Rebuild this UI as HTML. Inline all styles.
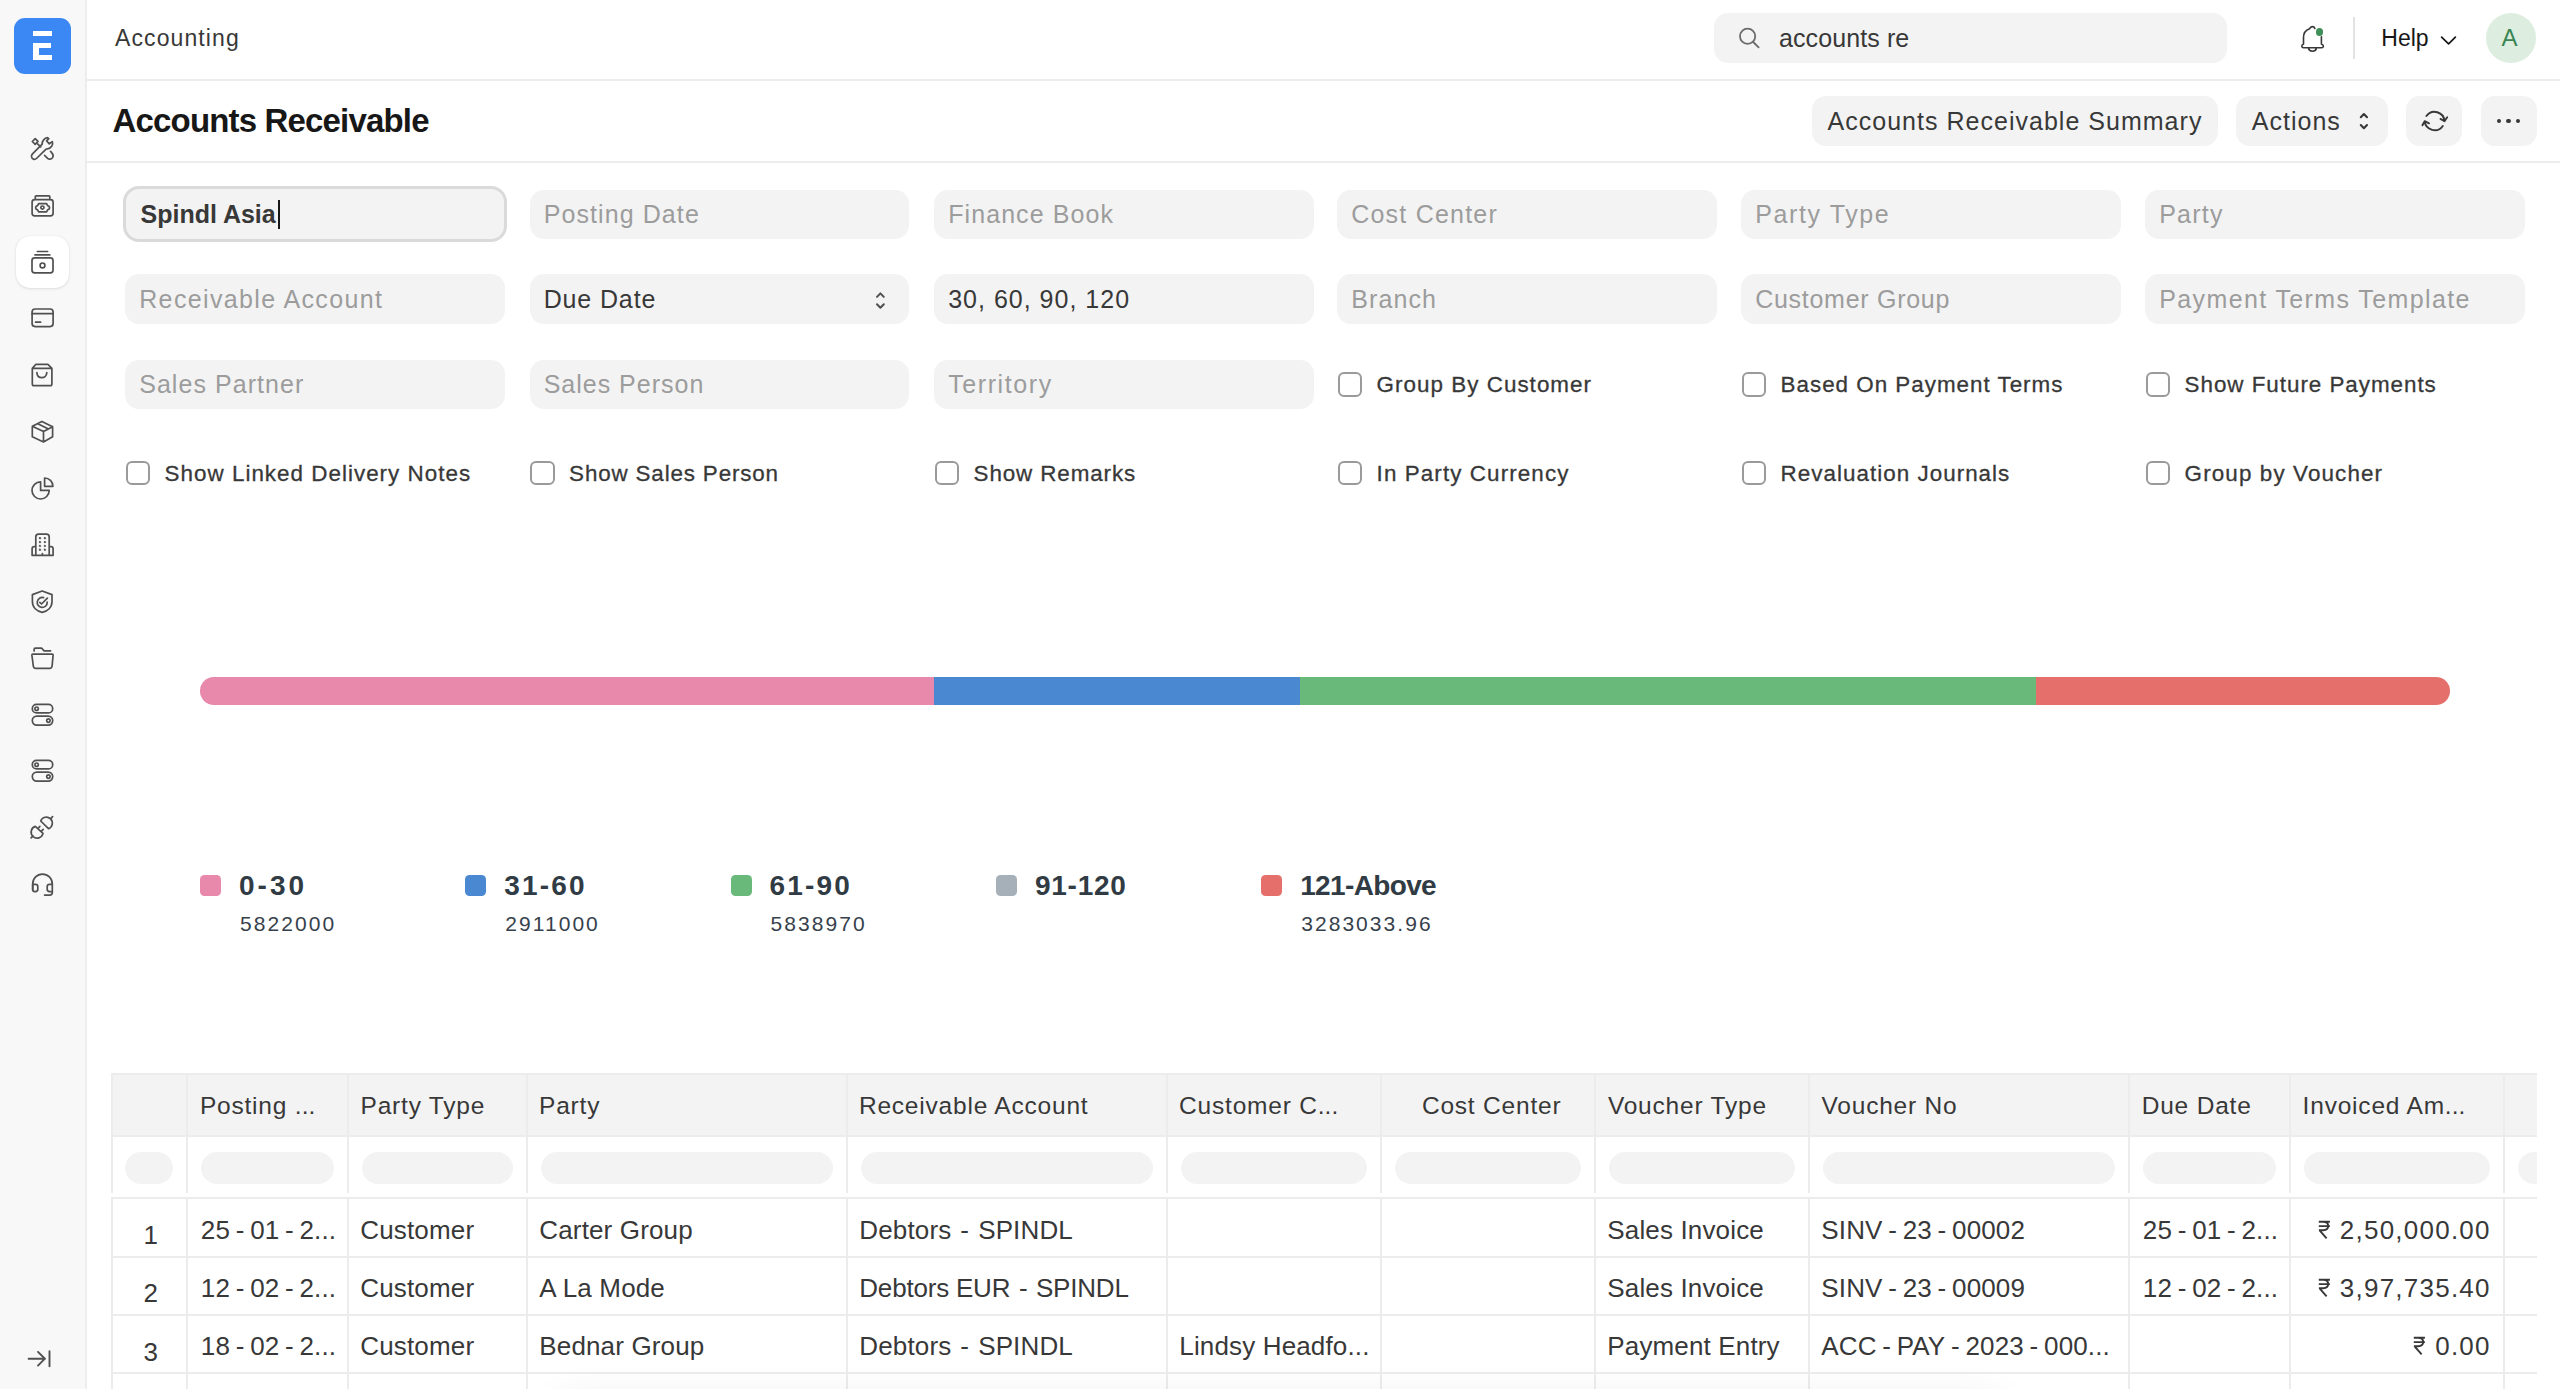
<!DOCTYPE html>
<html><head><meta charset="utf-8"><style>
*{box-sizing:border-box;margin:0;padding:0}
html,body{width:2560px;height:1389px;overflow:hidden;background:#fff;font-family:"Liberation Sans",sans-serif;color:#383838}
.a{position:absolute}
.t{position:absolute;white-space:nowrap}
.hy{margin:0 5.65px}
</style></head><body>
<div class="a" style="left:0px;top:0px;width:86px;height:1389px;background:#f8f8f8;"></div>
<div class="a" style="left:85px;top:0px;width:2px;height:1389px;background:#ededed;"></div>
<div class="a" style="left:14px;top:18px;width:57px;height:56px;border-radius:11px;background:#3b87f4"></div>
<div class="a" style="left:33px;top:31px;width:19px;height:5px;background:#fff;"></div>
<div class="a" style="left:33px;top:43px;width:18px;height:5px;background:#fff;"></div>
<div class="a" style="left:33px;top:43px;width:6px;height:17px;background:#fff;"></div>
<div class="a" style="left:33px;top:55px;width:19px;height:5px;background:#fff;"></div>
<svg class="a" style="left:22px;top:128px" width="40" height="40" viewBox="0 0 40 40" fill="none" stroke="#505050" stroke-width="1.7" stroke-linecap="round" stroke-linejoin="round"><path d="M20.2,16.1 C20,13 22.5,10 25.5,9.6 L26.8,10.6 L24.6,12.9 L27.3,15.8 L30.3,13.6 C31.6,16.8 29,20.6 25.5,20.8 L23.8,21.3 L14.5,30.5 C13,32 9.8,31.5 9.5,28.5 C9.3,27.5 9.8,26.5 10.5,25.8 Z"/><path d="M10.3,13.5 L13.2,10.6 L16,13.4 L13.2,16.3 Z M15.6,15.9 L18.7,18.9"/><path d="M22.6,27.4 L25.6,30.3 C27,31.6 29.6,31.3 30.6,29.6 C31.4,28.2 31,26.2 30,25.1 L28.5,23.3"/></svg>
<svg class="a" style="left:22px;top:185px" width="40" height="40" viewBox="0 0 40 40" fill="none" stroke="#505050" stroke-width="1.7" stroke-linecap="round" stroke-linejoin="round"><path d="M13.3,13.2 V11.6 Q13.3,10.8 14.1,10.8 H27 Q27.8,10.8 27.8,11.6 V13.2"/><rect x="10.1" y="14.6" width="21" height="16.2" rx="2.6"/><path d="M16.6,18.6 H24.6 L25.6,20.6 Q27.6,21 27.6,22.7 Q27.6,24.4 25.6,24.8 L24.6,26.8 H16.6 L15.6,24.8 Q13.6,24.4 13.6,22.7 Q13.6,21 15.6,20.6 Z"/><circle cx="20.4" cy="22.6" r="1.6"/></svg>
<div class="a" style="left:16px;top:236px;width:53px;height:52px;border-radius:14px;background:#fff;box-shadow:0 1px 3px rgba(0,0,0,0.10),0 0 1px rgba(0,0,0,0.12)"></div>
<svg class="a" style="left:10px;top:230px" width="64" height="64" viewBox="0 0 64 64" fill="none" stroke="#505050" stroke-width="1.7" stroke-linecap="round" stroke-linejoin="round"><path d="M27.4,21.5 H37.6 M25,24.9 H39.8"/><rect x="22" y="27.9" width="21" height="15" rx="2.6"/><circle cx="32.5" cy="35.4" r="2.4"/></svg>
<svg class="a" style="left:22px;top:298px" width="40" height="40" viewBox="0 0 40 40" fill="none" stroke="#505050" stroke-width="1.7" stroke-linecap="round" stroke-linejoin="round"><rect x="10.1" y="11" width="21" height="17.6" rx="3"/><path d="M10.1,15.7 H31.1 M13.6,24.2 H18.6"/></svg>
<svg class="a" style="left:22px;top:355px" width="40" height="40" viewBox="0 0 40 40" fill="none" stroke="#505050" stroke-width="1.7" stroke-linecap="round" stroke-linejoin="round"><path d="M10.3,13.4 L13.9,9.3 H25.9 L29.9,13.4 V28.9 Q29.9,30.6 28.2,30.6 H12 Q10.3,30.6 10.3,28.9 Z M10.3,13.3 H29.9"/><path d="M14.9,17.6 C15.3,24.4 24.5,24.4 24.8,17.6"/></svg>
<svg class="a" style="left:22px;top:411px" width="40" height="40" viewBox="0 0 40 40" fill="none" stroke="#505050" stroke-width="1.7" stroke-linecap="round" stroke-linejoin="round"><path d="M10.3,15.3 L19.9,10.4 L30.6,15.7 L21.5,20.4 Z M10.3,15.3 V25.8 L21.5,31 L30.6,25.8 V15.7 M21.5,20.4 V31 M15.8,12.8 L26,17.8"/></svg>
<svg class="a" style="left:22px;top:468px" width="40" height="40" viewBox="0 0 40 40" fill="none" stroke="#505050" stroke-width="1.7" stroke-linecap="round" stroke-linejoin="round"><path d="M18.6,13.8 A8.6,8.6 0 1 0 27.2,22.4 H18.6 Z"/><path d="M22.6,10 V18.3 H30.9 A8.3,8.3 0 0 0 22.6,10 Z"/></svg>
<svg class="a" style="left:22px;top:525px" width="40" height="40" viewBox="0 0 40 40" fill="none" stroke="#505050" stroke-width="1.7" stroke-linecap="round" stroke-linejoin="round"><path d="M13.8,30.3 V11.9 Q13.8,9.2 16.5,9.2 H24.5 Q27.2,9.2 27.2,11.9 V30.3 M13.8,21.7 H12.2 Q10.1,21.7 10.1,23.8 V30.3 H31.1 V23.8 Q31.1,21.7 29,21.7 H27.2 M20.4,28.6 V30.3"/><rect x="17.2" y="12.6" width="1.6" height="1.2" rx="0.5" fill="#505050" stroke-width="0.8"/><rect x="17.2" y="16.5" width="1.6" height="1.2" rx="0.5" fill="#505050" stroke-width="0.8"/><rect x="17.2" y="20.4" width="1.6" height="1.2" rx="0.5" fill="#505050" stroke-width="0.8"/><rect x="17.2" y="24.2" width="1.6" height="1.2" rx="0.5" fill="#505050" stroke-width="0.8"/><rect x="22.1" y="12.6" width="1.6" height="1.2" rx="0.5" fill="#505050" stroke-width="0.8"/><rect x="22.1" y="16.5" width="1.6" height="1.2" rx="0.5" fill="#505050" stroke-width="0.8"/><rect x="22.1" y="20.4" width="1.6" height="1.2" rx="0.5" fill="#505050" stroke-width="0.8"/><rect x="22.1" y="24.2" width="1.6" height="1.2" rx="0.5" fill="#505050" stroke-width="0.8"/></svg>
<svg class="a" style="left:22px;top:581px" width="40" height="40" viewBox="0 0 40 40" fill="none" stroke="#505050" stroke-width="1.7" stroke-linecap="round" stroke-linejoin="round"><path d="M20.2,10 L10.4,13.6 V20.5 C10.4,26.4 14.6,30.2 20.2,31.3 C25.8,30.2 30,26.4 30,20.5 V13.6 Z"/><path d="M25.2,21.2 A5,5 0 1 1 21.6,16.6"/><path d="M17.8,21.4 L19.5,23 L25.4,17.2"/></svg>
<svg class="a" style="left:22px;top:638px" width="40" height="40" viewBox="0 0 40 40" fill="none" stroke="#505050" stroke-width="1.7" stroke-linecap="round" stroke-linejoin="round"><path d="M12.1,13 V11.5 Q12.1,10.2 13.4,10.2 H19.6 L22.1,12.8 H28.6"/><path d="M10.9,16.1 H30.1 Q31.2,16.1 31.1,17.2 L30.1,28 Q29.9,30.3 27.6,30.3 H13.7 Q11.5,30.3 11.3,28 L9.9,17.2 Q9.8,16.1 10.9,16.1 Z"/></svg>
<svg class="a" style="left:22px;top:695px" width="40" height="40" viewBox="0 0 40 40" fill="none" stroke="#505050" stroke-width="1.7" stroke-linecap="round" stroke-linejoin="round"><rect x="10.3" y="9.4" width="20.4" height="8.5" rx="4.25"/><rect x="10.3" y="21.1" width="20.4" height="9" rx="4.5"/><circle cx="14.6" cy="13.7" r="1.7"/><circle cx="26.4" cy="25.6" r="1.7"/></svg>
<svg class="a" style="left:22px;top:751px" width="40" height="40" viewBox="0 0 40 40" fill="none" stroke="#505050" stroke-width="1.7" stroke-linecap="round" stroke-linejoin="round"><rect x="10.3" y="9.4" width="20.4" height="8.5" rx="4.25"/><rect x="10.3" y="21.1" width="20.4" height="9" rx="4.5"/><circle cx="14.6" cy="13.7" r="1.7"/><circle cx="26.4" cy="25.6" r="1.7"/></svg>
<svg class="a" style="left:22px;top:808px" width="40" height="40" viewBox="0 0 40 40" fill="none" stroke="#505050" stroke-width="1.7" stroke-linecap="round" stroke-linejoin="round"><path d="M18.7,13 A6,6 0 1 1 26.5,20.7 Z M28.5,10.8 L30.6,8.6"/><path d="M21,25.4 A6,6 0 1 1 13.3,18.4 Z M11,27.8 L9.1,29.8 M16.2,20.1 L17.9,18.3 M19.5,23.2 L21.2,21.4"/></svg>
<svg class="a" style="left:22px;top:864px" width="40" height="40" viewBox="0 0 40 40" fill="none" stroke="#505050" stroke-width="1.7" stroke-linecap="round" stroke-linejoin="round"><path d="M10.7,26 V19.9 A9.8,9.8 0 0 1 30.3,19.9 V28.5 Q30.3,31.1 27.7,31.1 H22.6"/><path d="M10.7,20.3 H13.5 Q15.8,20.3 15.8,22.6 V25.3 Q15.8,27.6 13.5,27.6 H12.7 Q10.7,27.6 10.7,25.6 Z"/><path d="M30.3,20.3 H27.5 Q25.2,20.3 25.2,22.6 V25.3 Q25.2,27.6 27.5,27.6 H30.3"/></svg>
<svg class="a" style="left:20px;top:1338px" width="40" height="40" viewBox="0 0 40 40" fill="none" stroke="#505050" stroke-width="1.9" stroke-linecap="round" stroke-linejoin="round"><path d="M8.6,20.7 H25 M18,13.9 L24.9,20.7 L18,27.6 M29.5,13.2 V28.3"/></svg>
<div class="a" style="left:87px;top:79px;width:2473px;height:2px;background:#ededed;"></div>
<div class="t" style="top:27.33px;font-size:23px;line-height:23px;color:#383838;letter-spacing:1.1px;left:115.00px;">Accounting</div>
<div class="a" style="left:1714px;top:13px;width:513px;height:50px;background:#f3f3f3;border-radius:14px;"></div>
<svg class="a" style="left:1736px;top:25px" width="26" height="26" viewBox="0 0 26 26" fill="none" stroke="#6b6b6b" stroke-width="1.8" stroke-linecap="round" stroke-linejoin="round"><circle cx="11.6" cy="11.2" r="7.6"/><path d="M17.2,17 L22.6,22.4"/></svg>
<div class="t" style="top:25.84px;font-size:25px;line-height:25px;color:#383838;letter-spacing:0.1px;left:1779.00px;">accounts re</div>
<svg class="a" style="left:2292px;top:18px" width="40" height="40" viewBox="0 0 40 40" fill="none" stroke="#383838" stroke-width="1.6" stroke-linecap="round" stroke-linejoin="round"><path d="M22.8,10.4 C22,8.3 19,7.6 17.5,10.8 C13.6,12.2 11.5,15.5 11.5,19.5 V26 Q9.6,27 9.8,28.4 Q10,29.7 11.5,29.7 H29.7 Q31.2,29.7 31.4,28.4 Q31.6,27 29.4,26 V18.8 M16.5,30.2 Q17,33.3 20.5,33.3 Q24,33.3 24.4,30.2"/></svg>
<div class="a" style="left:2315.6px;top:28px;width:7.6px;height:7.6px;border-radius:50%;background:#3f8f5a"></div>
<div class="a" style="left:2353px;top:17px;width:2px;height:42px;background:#e2e2e2;"></div>
<div class="t" style="top:26.53px;font-size:23px;line-height:23px;color:#171717;left:2381.30px;">Help</div>
<svg class="a" style="left:2430px;top:20px" width="40" height="40" viewBox="0 0 40 40" fill="none" stroke="#171717" stroke-width="1.7" stroke-linecap="round" stroke-linejoin="round"><path d="M11.6,17.1 L18.6,23.9 L25.4,17.1"/></svg>
<div class="a" style="left:2486px;top:13px;width:49.5px;height:49.5px;border-radius:50%;background:#ddeee0"></div>
<div class="t" style="top:26.28px;font-size:24px;line-height:24px;color:#3b8553;left:2501.50px;">A</div>
<div class="a" style="left:87px;top:161px;width:2473px;height:2px;background:#ededed;"></div>
<div class="t" style="top:103.77px;font-size:33px;line-height:33px;color:#171717;letter-spacing:-0.83px;font-weight:bold;left:112.50px;">Accounts Receivable</div>
<div class="a" style="left:1812px;top:96px;width:406px;height:50px;background:#f3f3f3;border-radius:14px;"></div>
<div class="t" style="top:108.74px;font-size:25px;line-height:25px;color:#383838;letter-spacing:1.02px;left:1827.50px;">Accounts Receivable Summary</div>
<div class="a" style="left:2236px;top:96px;width:152px;height:50px;background:#f3f3f3;border-radius:14px;"></div>
<div class="t" style="top:108.74px;font-size:25px;line-height:25px;color:#383838;letter-spacing:1.0px;left:2251.80px;">Actions</div>
<svg class="a" style="left:2340px;top:101px" width="40" height="40" viewBox="0 0 40 40" fill="none" stroke="#383838" stroke-width="2.1" stroke-linecap="round" stroke-linejoin="round"><path d="M20.8,16.2 L23.9,13 L27,16.2 M20.8,24 L23.9,27.2 L27,24"/></svg>
<div class="a" style="left:2406px;top:96px;width:56px;height:50px;background:#f3f3f3;border-radius:14px;"></div>
<svg class="a" style="left:2414px;top:101px" width="40" height="40" viewBox="0 0 40 40" fill="none" stroke="#383838" stroke-width="1.9" stroke-linecap="round" stroke-linejoin="round"><path d="M12.4,15 A10,10 0 0 1 30.5,20.2 M26.5,17.9 L30.5,20.2 L33.2,16.2 M28.8,25 A10,10 0 0 1 10.7,20.2 M15,22.3 L10.7,20.2 L8.4,24.2"/></svg>
<div class="a" style="left:2481px;top:96px;width:56px;height:50px;background:#f3f3f3;border-radius:14px;"></div>
<div class="a" style="left:2496.7px;top:118.7px;width:4.6px;height:4.6px;border-radius:50%;background:#383838"></div>
<div class="a" style="left:2506.0px;top:118.7px;width:4.6px;height:4.6px;border-radius:50%;background:#383838"></div>
<div class="a" style="left:2515.5px;top:118.7px;width:4.6px;height:4.6px;border-radius:50%;background:#383838"></div>
<div class="a" style="left:122.5px;top:186.2px;width:384.5px;height:56px;border-radius:16px;background:#f3f3f3;border:3px solid #dadada"></div>
<div class="t" style="top:201.64px;font-size:25px;line-height:25px;color:#383838;font-weight:bold;left:140.50px;">Spindl Asia</div>
<div class="a" style="left:277.6px;top:199.5px;width:2px;height:29.5px;background:#171717;"></div>
<div class="a" style="left:529.5px;top:189.5px;width:379.5px;height:49.5px;background:#f3f3f3;border-radius:14px;"></div>
<div class="t" style="top:201.64px;font-size:25px;line-height:25px;color:#9c9c9c;letter-spacing:1.087px;left:543.70px;">Posting Date</div>
<div class="a" style="left:934px;top:189.5px;width:379.5px;height:49.5px;background:#f3f3f3;border-radius:14px;"></div>
<div class="t" style="top:201.64px;font-size:25px;line-height:25px;color:#9c9c9c;letter-spacing:1.08px;left:948.20px;">Finance Book</div>
<div class="a" style="left:1337px;top:189.5px;width:379.5px;height:49.5px;background:#f3f3f3;border-radius:14px;"></div>
<div class="t" style="top:201.64px;font-size:25px;line-height:25px;color:#9c9c9c;letter-spacing:1.22px;left:1351.20px;">Cost Center</div>
<div class="a" style="left:1741px;top:189.5px;width:379.5px;height:49.5px;background:#f3f3f3;border-radius:14px;"></div>
<div class="t" style="top:201.64px;font-size:25px;line-height:25px;color:#9c9c9c;letter-spacing:1.612px;left:1755.20px;">Party Type</div>
<div class="a" style="left:2145px;top:189.5px;width:379.5px;height:49.5px;background:#f3f3f3;border-radius:14px;"></div>
<div class="t" style="top:201.64px;font-size:25px;line-height:25px;color:#9c9c9c;letter-spacing:1.22px;left:2159.20px;">Party</div>
<div class="a" style="left:125px;top:274px;width:379.5px;height:49.5px;background:#f3f3f3;border-radius:14px;"></div>
<div class="t" style="top:287.34px;font-size:25px;line-height:25px;color:#9c9c9c;letter-spacing:1.366px;left:139.20px;">Receivable Account</div>
<div class="a" style="left:529.5px;top:274px;width:379.5px;height:49.5px;background:#f3f3f3;border-radius:14px;"></div>
<div class="t" style="top:287.34px;font-size:25px;line-height:25px;color:#383838;letter-spacing:0.863px;left:543.70px;">Due Date</div>
<svg class="a" style="left:850px;top:280px" width="60" height="40" viewBox="0 0 60 40" fill="none" stroke="#505050" stroke-width="2.0" stroke-linecap="round" stroke-linejoin="round"><path d="M27,16.9 L30.4,13.4 L33.8,16.9 M27,24.3 L30.4,27.8 L33.8,24.3"/></svg>
<div class="a" style="left:934px;top:274px;width:379.5px;height:49.5px;background:#f3f3f3;border-radius:14px;"></div>
<div class="t" style="top:287.34px;font-size:25px;line-height:25px;color:#383838;letter-spacing:1.004px;left:948.20px;">30, 60, 90, 120</div>
<div class="a" style="left:1337px;top:274px;width:379.5px;height:49.5px;background:#f3f3f3;border-radius:14px;"></div>
<div class="t" style="top:287.34px;font-size:25px;line-height:25px;color:#9c9c9c;letter-spacing:1.12px;left:1351.20px;">Branch</div>
<div class="a" style="left:1741px;top:274px;width:379.5px;height:49.5px;background:#f3f3f3;border-radius:14px;"></div>
<div class="t" style="top:287.34px;font-size:25px;line-height:25px;color:#9c9c9c;letter-spacing:0.719px;left:1755.20px;">Customer Group</div>
<div class="a" style="left:2145px;top:274px;width:379.5px;height:49.5px;background:#f3f3f3;border-radius:14px;"></div>
<div class="t" style="top:287.34px;font-size:25px;line-height:25px;color:#9c9c9c;letter-spacing:1.388px;left:2159.20px;">Payment Terms Template</div>
<div class="a" style="left:125px;top:359.5px;width:379.5px;height:49.5px;background:#f3f3f3;border-radius:14px;"></div>
<div class="t" style="top:371.64px;font-size:25px;line-height:25px;color:#9c9c9c;letter-spacing:1.052px;left:139.20px;">Sales Partner</div>
<div class="a" style="left:529.5px;top:359.5px;width:379.5px;height:49.5px;background:#f3f3f3;border-radius:14px;"></div>
<div class="t" style="top:371.64px;font-size:25px;line-height:25px;color:#9c9c9c;letter-spacing:0.992px;left:543.70px;">Sales Person</div>
<div class="a" style="left:934px;top:359.5px;width:379.5px;height:49.5px;background:#f3f3f3;border-radius:14px;"></div>
<div class="t" style="top:371.64px;font-size:25px;line-height:25px;color:#9c9c9c;letter-spacing:1.59px;left:948.20px;">Territory</div>
<div class="a" style="left:1337.5px;top:372px;width:24.5px;height:24.5px;border:2px solid #9a9a9a;border-radius:6px;background:#fff"></div>
<div class="t" style="top:374.24px;font-size:22.4px;line-height:22.4px;color:#383838;letter-spacing:1.034px;-webkit-text-stroke:0.3px #383838;left:1376.60px;">Group By Customer</div>
<div class="a" style="left:1741.5px;top:372px;width:24.5px;height:24.5px;border:2px solid #9a9a9a;border-radius:6px;background:#fff"></div>
<div class="t" style="top:374.24px;font-size:22.4px;line-height:22.4px;color:#383838;letter-spacing:0.994px;-webkit-text-stroke:0.3px #383838;left:1780.60px;">Based On Payment Terms</div>
<div class="a" style="left:2145.5px;top:372px;width:24.5px;height:24.5px;border:2px solid #9a9a9a;border-radius:6px;background:#fff"></div>
<div class="t" style="top:374.24px;font-size:22.4px;line-height:22.4px;color:#383838;letter-spacing:0.974px;-webkit-text-stroke:0.3px #383838;left:2184.60px;">Show Future Payments</div>
<div class="a" style="left:125.5px;top:460.5px;width:24.5px;height:24.5px;border:2px solid #9a9a9a;border-radius:6px;background:#fff"></div>
<div class="t" style="top:462.74px;font-size:22.4px;line-height:22.4px;color:#383838;letter-spacing:1.02px;-webkit-text-stroke:0.3px #383838;left:164.60px;">Show Linked Delivery Notes</div>
<div class="a" style="left:530.0px;top:460.5px;width:24.5px;height:24.5px;border:2px solid #9a9a9a;border-radius:6px;background:#fff"></div>
<div class="t" style="top:462.74px;font-size:22.4px;line-height:22.4px;color:#383838;letter-spacing:0.847px;-webkit-text-stroke:0.3px #383838;left:569.10px;">Show Sales Person</div>
<div class="a" style="left:934.5px;top:460.5px;width:24.5px;height:24.5px;border:2px solid #9a9a9a;border-radius:6px;background:#fff"></div>
<div class="t" style="top:462.74px;font-size:22.4px;line-height:22.4px;color:#383838;letter-spacing:0.891px;-webkit-text-stroke:0.3px #383838;left:973.60px;">Show Remarks</div>
<div class="a" style="left:1337.5px;top:460.5px;width:24.5px;height:24.5px;border:2px solid #9a9a9a;border-radius:6px;background:#fff"></div>
<div class="t" style="top:462.74px;font-size:22.4px;line-height:22.4px;color:#383838;letter-spacing:1.098px;-webkit-text-stroke:0.3px #383838;left:1376.60px;">In Party Currency</div>
<div class="a" style="left:1741.5px;top:460.5px;width:24.5px;height:24.5px;border:2px solid #9a9a9a;border-radius:6px;background:#fff"></div>
<div class="t" style="top:462.74px;font-size:22.4px;line-height:22.4px;color:#383838;letter-spacing:1.032px;-webkit-text-stroke:0.3px #383838;left:1780.60px;">Revaluation Journals</div>
<div class="a" style="left:2145.5px;top:460.5px;width:24.5px;height:24.5px;border:2px solid #9a9a9a;border-radius:6px;background:#fff"></div>
<div class="t" style="top:462.74px;font-size:22.4px;line-height:22.4px;color:#383838;letter-spacing:1.129px;-webkit-text-stroke:0.3px #383838;left:2184.60px;">Group by Voucher</div>
<div class="a" style="left:200px;top:677px;width:2250px;height:28px;border-radius:14px;overflow:hidden;display:flex"><div style="width:733.7px;background:#e888ab"></div><div style="width:366.8px;background:#4a88d2"></div><div style="width:735.8px;background:#68b97a"></div><div style="flex:1;background:#e46f6b"></div></div>
<div class="a" style="left:200.0px;top:875px;width:21px;height:21px;background:#e888ab;border-radius:4.5px;"></div>
<div class="t" style="top:871.80px;font-size:28px;line-height:28px;color:#313b44;letter-spacing:3.0px;font-weight:bold;left:239.00px;">0-30</div>
<div class="t" style="top:912.92px;font-size:21px;line-height:21px;color:#36414c;letter-spacing:2.05px;left:240.00px;">5822000</div>
<div class="a" style="left:465.3px;top:875px;width:21px;height:21px;background:#4a88d2;border-radius:4.5px;"></div>
<div class="t" style="top:871.80px;font-size:28px;line-height:28px;color:#313b44;letter-spacing:2.15px;font-weight:bold;left:504.30px;">31-60</div>
<div class="t" style="top:912.92px;font-size:21px;line-height:21px;color:#36414c;letter-spacing:2.05px;left:505.30px;">2911000</div>
<div class="a" style="left:730.6px;top:875px;width:21px;height:21px;background:#68b97a;border-radius:4.5px;"></div>
<div class="t" style="top:871.80px;font-size:28px;line-height:28px;color:#313b44;letter-spacing:2.15px;font-weight:bold;left:769.60px;">61-90</div>
<div class="t" style="top:912.92px;font-size:21px;line-height:21px;color:#36414c;letter-spacing:2.05px;left:770.60px;">5838970</div>
<div class="a" style="left:995.9px;top:875px;width:21px;height:21px;background:#a6b0b9;border-radius:4.5px;"></div>
<div class="t" style="top:871.80px;font-size:28px;line-height:28px;color:#313b44;letter-spacing:0.76px;font-weight:bold;left:1034.90px;">91-120</div>
<div class="a" style="left:1261.2px;top:875px;width:21px;height:21px;background:#e46f6b;border-radius:4.5px;"></div>
<div class="t" style="top:871.80px;font-size:28px;line-height:28px;color:#313b44;letter-spacing:-0.64px;font-weight:bold;left:1300.20px;">121-Above</div>
<div class="t" style="top:912.92px;font-size:21px;line-height:21px;color:#36414c;letter-spacing:2.05px;left:1301.20px;">3283033.96</div>
<div class="a" style="left:112px;top:1074px;width:2425px;height:62px;background:#f3f3f3;"></div>
<div class="a" style="left:111px;top:1074px;width:2px;height:315px;background:#ececec;"></div>
<div class="a" style="left:111px;top:1073px;width:2426px;height:2px;background:#ececec;"></div>
<div class="a" style="left:112px;top:1135px;width:2425px;height:2px;background:#ececec;"></div>
<div class="a" style="left:112px;top:1196.5px;width:2425px;height:2px;background:#ececec;"></div>
<div class="a" style="left:112px;top:1255.5px;width:2425px;height:2px;background:#ececec;"></div>
<div class="a" style="left:112px;top:1313.5px;width:2425px;height:2px;background:#ececec;"></div>
<div class="a" style="left:112px;top:1372px;width:2425px;height:2px;background:#ececec;"></div>
<div class="a" style="left:186px;top:1074px;width:2px;height:315px;background:#ececec;"></div>
<div class="a" style="left:347px;top:1074px;width:2px;height:315px;background:#ececec;"></div>
<div class="a" style="left:526px;top:1074px;width:2px;height:315px;background:#ececec;"></div>
<div class="a" style="left:846px;top:1074px;width:2px;height:315px;background:#ececec;"></div>
<div class="a" style="left:1166px;top:1074px;width:2px;height:315px;background:#ececec;"></div>
<div class="a" style="left:1380px;top:1074px;width:2px;height:315px;background:#ececec;"></div>
<div class="a" style="left:1594px;top:1074px;width:2px;height:315px;background:#ececec;"></div>
<div class="a" style="left:1808px;top:1074px;width:2px;height:315px;background:#ececec;"></div>
<div class="a" style="left:2128px;top:1074px;width:2px;height:315px;background:#ececec;"></div>
<div class="a" style="left:2289px;top:1074px;width:2px;height:315px;background:#ececec;"></div>
<div class="a" style="left:2503px;top:1074px;width:2px;height:315px;background:#ececec;"></div>
<div class="t" style="top:1093.76px;font-size:24.5px;line-height:24.5px;color:#383838;letter-spacing:0.8px;left:199.90px;">Posting <span style="letter-spacing:0">...</span></div>
<div class="t" style="top:1093.76px;font-size:24.5px;line-height:24.5px;color:#383838;letter-spacing:0.8px;left:360.50px;">Party Type</div>
<div class="t" style="top:1093.76px;font-size:24.5px;line-height:24.5px;color:#383838;letter-spacing:0.8px;left:539.00px;">Party</div>
<div class="t" style="top:1093.76px;font-size:24.5px;line-height:24.5px;color:#383838;letter-spacing:0.8px;left:858.90px;">Receivable Account</div>
<div class="t" style="top:1093.76px;font-size:24.5px;line-height:24.5px;color:#383838;letter-spacing:0.8px;left:1179.10px;">Customer C<span style="letter-spacing:0">...</span></div>
<div class="t" style="top:1093.76px;font-size:24.5px;line-height:24.5px;color:#383838;letter-spacing:0.8px;left:1421.90px;">Cost Center</div>
<div class="t" style="top:1093.76px;font-size:24.5px;line-height:24.5px;color:#383838;letter-spacing:0.8px;left:1607.90px;">Voucher Type</div>
<div class="t" style="top:1093.76px;font-size:24.5px;line-height:24.5px;color:#383838;letter-spacing:0.8px;left:1821.50px;">Voucher No</div>
<div class="t" style="top:1093.76px;font-size:24.5px;line-height:24.5px;color:#383838;letter-spacing:0.8px;left:2141.70px;">Due Date</div>
<div class="t" style="top:1093.76px;font-size:24.5px;line-height:24.5px;color:#383838;letter-spacing:0.8px;left:2302.60px;">Invoiced Am<span style="letter-spacing:0">...</span></div>
<div class="a" style="left:125px;top:1152px;width:48px;height:32px;background:#f3f3f3;border-radius:16px;"></div>
<div class="a" style="left:201px;top:1152px;width:133px;height:32px;background:#f3f3f3;border-radius:16px;"></div>
<div class="a" style="left:362px;top:1152px;width:151px;height:32px;background:#f3f3f3;border-radius:16px;"></div>
<div class="a" style="left:541px;top:1152px;width:292px;height:32px;background:#f3f3f3;border-radius:16px;"></div>
<div class="a" style="left:861px;top:1152px;width:292px;height:32px;background:#f3f3f3;border-radius:16px;"></div>
<div class="a" style="left:1181px;top:1152px;width:186px;height:32px;background:#f3f3f3;border-radius:16px;"></div>
<div class="a" style="left:1395px;top:1152px;width:186px;height:32px;background:#f3f3f3;border-radius:16px;"></div>
<div class="a" style="left:1609px;top:1152px;width:186px;height:32px;background:#f3f3f3;border-radius:16px;"></div>
<div class="a" style="left:1823px;top:1152px;width:292px;height:32px;background:#f3f3f3;border-radius:16px;"></div>
<div class="a" style="left:2143px;top:1152px;width:133px;height:32px;background:#f3f3f3;border-radius:16px;"></div>
<div class="a" style="left:2304px;top:1152px;width:186px;height:32px;background:#f3f3f3;border-radius:16px;"></div>
<div class="a" style="left:2518px;top:1152px;width:35px;height:32px;background:#f3f3f3;border-radius:16px;"></div>
<div class="a" style="left:111px;top:1193px;width:2px;height:3.5px;background:#fff;"></div>
<div class="a" style="left:186px;top:1193px;width:2px;height:3.5px;background:#fff;"></div>
<div class="a" style="left:347px;top:1193px;width:2px;height:3.5px;background:#fff;"></div>
<div class="a" style="left:526px;top:1193px;width:2px;height:3.5px;background:#fff;"></div>
<div class="a" style="left:846px;top:1193px;width:2px;height:3.5px;background:#fff;"></div>
<div class="a" style="left:1166px;top:1193px;width:2px;height:3.5px;background:#fff;"></div>
<div class="a" style="left:1380px;top:1193px;width:2px;height:3.5px;background:#fff;"></div>
<div class="a" style="left:1594px;top:1193px;width:2px;height:3.5px;background:#fff;"></div>
<div class="a" style="left:1808px;top:1193px;width:2px;height:3.5px;background:#fff;"></div>
<div class="a" style="left:2128px;top:1193px;width:2px;height:3.5px;background:#fff;"></div>
<div class="a" style="left:2289px;top:1193px;width:2px;height:3.5px;background:#fff;"></div>
<div class="a" style="left:2503px;top:1193px;width:2px;height:3.5px;background:#fff;"></div>
<div class="a" style="left:2537px;top:1060px;width:23px;height:329px;background:#fff;"></div>
<div class="t" style="top:1222.19px;font-size:26px;line-height:26px;color:#383838;left:143.50px;">1</div>
<div class="t" style="top:1216.99px;font-size:26px;line-height:26px;color:#383838;letter-spacing:0.15px;left:200.80px;">25<span class="hy">-</span>01<span class="hy">-</span>2...</div>
<div class="t" style="top:1216.99px;font-size:26px;line-height:26px;color:#383838;letter-spacing:0.15px;left:360.30px;">Customer</div>
<div class="t" style="top:1216.99px;font-size:26px;line-height:26px;color:#383838;letter-spacing:0.15px;left:539.30px;">Carter Group</div>
<div class="t" style="top:1216.99px;font-size:26px;line-height:26px;color:#383838;letter-spacing:0.15px;left:859.30px;">Debtors <span style="margin:0 1.6px">-</span> SPINDL</div>
<div class="t" style="top:1216.99px;font-size:26px;line-height:26px;color:#383838;letter-spacing:0.15px;left:1607.30px;">Sales Invoice</div>
<div class="t" style="top:1216.99px;font-size:26px;line-height:26px;color:#383838;letter-spacing:0.15px;left:1821.30px;">SINV<span class="hy">-</span>23<span class="hy">-</span>00002</div>
<div class="t" style="top:1216.99px;font-size:26px;line-height:26px;color:#383838;letter-spacing:0.15px;left:2142.80px;">25<span class="hy">-</span>01<span class="hy">-</span>2...</div>
<div class="t" style="top:1216.99px;font-size:26px;line-height:26px;color:#383838;letter-spacing:1.23px;right:69.27px;text-align:right;"><svg width="23" height="20" viewBox="0 6 23 20" style="vertical-align:baseline;overflow:visible" fill="none" stroke="#383838" stroke-width="1.9" stroke-linecap="butt"><path d="M1.8,8.7 H12.9 M1.8,13.1 H12.9 M6.2,8.7 C9.6,8.7 11.2,10.6 11.2,13.1 C11.2,15.6 9.5,17.2 6.2,17.2 H1.9 M2.6,17.4 L9.6,25.4"/></svg>2,50,000.00</div>
<div class="t" style="top:1280.39px;font-size:26px;line-height:26px;color:#383838;left:143.50px;">2</div>
<div class="t" style="top:1275.19px;font-size:26px;line-height:26px;color:#383838;letter-spacing:0.15px;left:200.80px;">12<span class="hy">-</span>02<span class="hy">-</span>2...</div>
<div class="t" style="top:1275.19px;font-size:26px;line-height:26px;color:#383838;letter-spacing:0.15px;left:360.30px;">Customer</div>
<div class="t" style="top:1275.19px;font-size:26px;line-height:26px;color:#383838;letter-spacing:0.15px;left:539.30px;">A La Mode</div>
<div class="t" style="top:1275.19px;font-size:26px;line-height:26px;color:#383838;letter-spacing:-0.2px;left:859.30px;">Debtors EUR <span style="margin:0 1.6px">-</span> SPINDL</div>
<div class="t" style="top:1275.19px;font-size:26px;line-height:26px;color:#383838;letter-spacing:0.15px;left:1607.30px;">Sales Invoice</div>
<div class="t" style="top:1275.19px;font-size:26px;line-height:26px;color:#383838;letter-spacing:0.15px;left:1821.30px;">SINV<span class="hy">-</span>23<span class="hy">-</span>00009</div>
<div class="t" style="top:1275.19px;font-size:26px;line-height:26px;color:#383838;letter-spacing:0.15px;left:2142.80px;">12<span class="hy">-</span>02<span class="hy">-</span>2...</div>
<div class="t" style="top:1275.19px;font-size:26px;line-height:26px;color:#383838;letter-spacing:1.23px;right:69.27px;text-align:right;"><svg width="23" height="20" viewBox="0 6 23 20" style="vertical-align:baseline;overflow:visible" fill="none" stroke="#383838" stroke-width="1.9" stroke-linecap="butt"><path d="M1.8,8.7 H12.9 M1.8,13.1 H12.9 M6.2,8.7 C9.6,8.7 11.2,10.6 11.2,13.1 C11.2,15.6 9.5,17.2 6.2,17.2 H1.9 M2.6,17.4 L9.6,25.4"/></svg>3,97,735.40</div>
<div class="t" style="top:1338.59px;font-size:26px;line-height:26px;color:#383838;left:143.50px;">3</div>
<div class="t" style="top:1333.39px;font-size:26px;line-height:26px;color:#383838;letter-spacing:0.15px;left:200.80px;">18<span class="hy">-</span>02<span class="hy">-</span>2...</div>
<div class="t" style="top:1333.39px;font-size:26px;line-height:26px;color:#383838;letter-spacing:0.15px;left:360.30px;">Customer</div>
<div class="t" style="top:1333.39px;font-size:26px;line-height:26px;color:#383838;letter-spacing:0.15px;left:539.30px;">Bednar Group</div>
<div class="t" style="top:1333.39px;font-size:26px;line-height:26px;color:#383838;letter-spacing:0.15px;left:859.30px;">Debtors <span style="margin:0 1.6px">-</span> SPINDL</div>
<div class="t" style="top:1333.39px;font-size:26px;line-height:26px;color:#383838;letter-spacing:0.15px;left:1179.30px;">Lindsy Headfo...</div>
<div class="t" style="top:1333.39px;font-size:26px;line-height:26px;color:#383838;letter-spacing:0.15px;left:1607.30px;">Payment Entry</div>
<div class="t" style="top:1333.39px;font-size:26px;line-height:26px;color:#383838;letter-spacing:0.15px;left:1821.30px;">ACC<span class="hy">-</span>PAY<span class="hy">-</span>2023<span class="hy">-</span>000...</div>
<div class="t" style="top:1333.39px;font-size:26px;line-height:26px;color:#383838;letter-spacing:1.23px;right:69.27px;text-align:right;"><svg width="23" height="20" viewBox="0 6 23 20" style="vertical-align:baseline;overflow:visible" fill="none" stroke="#383838" stroke-width="1.9" stroke-linecap="butt"><path d="M1.8,8.7 H12.9 M1.8,13.1 H12.9 M6.2,8.7 C9.6,8.7 11.2,10.6 11.2,13.1 C11.2,15.6 9.5,17.2 6.2,17.2 H1.9 M2.6,17.4 L9.6,25.4"/></svg>0.00</div>
<div class="a" style="left:560px;top:1400px;width:1440px;height:200px;border-radius:16px;background:#fff;box-shadow:0 0 36px 6px rgba(0,0,0,0.06)"></div>
</body></html>
